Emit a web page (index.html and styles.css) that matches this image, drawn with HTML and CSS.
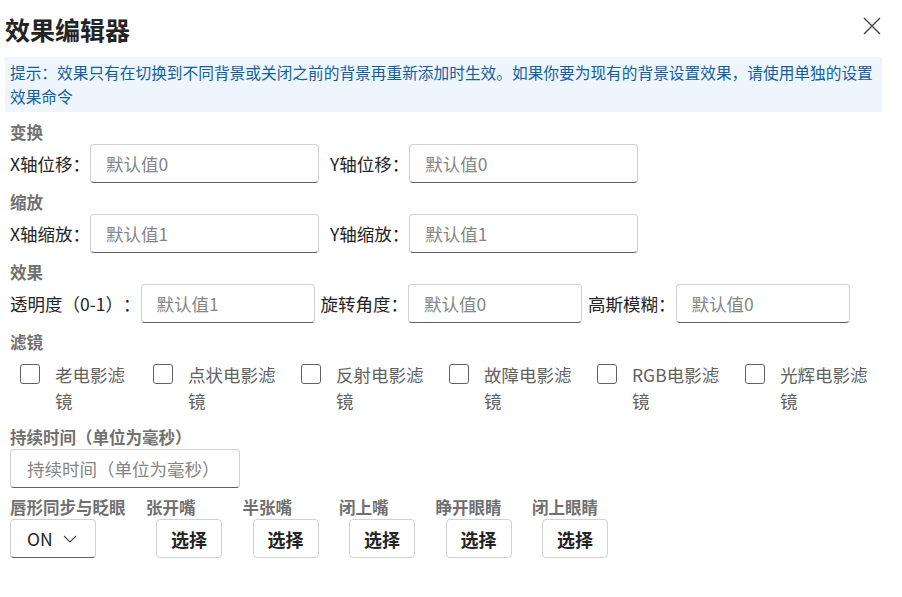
FILE: index.html
```html
<!DOCTYPE html>
<html lang="zh-CN">
<head>
<meta charset="utf-8">
<title>效果编辑器</title>
<link rel="stylesheet" href="styles.css">
</head>
<body>
<div class="dialog">
  <div class="header">
    <h1 class="title">效果编辑器</h1>
    <button class="close" aria-label="关闭">
      <svg width="20" height="20" viewBox="0 0 20 20"><path d="M2 2 L18 18 M18 2 L2 18" stroke="#424242" stroke-width="1.4" fill="none"/></svg>
    </button>
  </div>
  <div class="tip">提示：效果只有在切换到不同背景或关闭之前的背景再重新添加时生效。如果你要为现有的背景设置效果，请使用单独的设置效果命令</div>
  <div class="content">
    <div class="heading">变换</div>
    <div class="row row-pair">
      <label class="field"><span class="label">X轴位移：</span><input class="input" placeholder="默认值0"></label>
      <label class="field"><span class="label">Y轴位移：</span><input class="input" placeholder="默认值0"></label>
    </div>
    <div class="heading">缩放</div>
    <div class="row row-pair">
      <label class="field"><span class="label">X轴缩放：</span><input class="input" placeholder="默认值1"></label>
      <label class="field"><span class="label">Y轴缩放：</span><input class="input" placeholder="默认值1"></label>
    </div>
    <div class="heading">效果</div>
    <div class="row row-triple">
      <label class="field"><span class="label">透明度（0-1）：</span><input class="input" placeholder="默认值1"></label>
      <label class="field"><span class="label">旋转角度：</span><input class="input" placeholder="默认值0"></label>
      <label class="field"><span class="label">高斯模糊：</span><input class="input" placeholder="默认值0"></label>
    </div>
    <div class="heading">滤镜</div>
    <div class="filters">
      <label class="check"><span class="box"></span><span class="check-label">老电影滤镜</span></label>
      <label class="check"><span class="box"></span><span class="check-label">点状电影滤镜</span></label>
      <label class="check"><span class="box"></span><span class="check-label">反射电影滤镜</span></label>
      <label class="check"><span class="box"></span><span class="check-label">故障电影滤镜</span></label>
      <label class="check"><span class="box"></span><span class="check-label">RGB电影滤镜</span></label>
      <label class="check"><span class="box"></span><span class="check-label">光辉电影滤镜</span></label>
    </div>
    <div class="heading">持续时间（单位为毫秒）</div>
    <input class="input input-duration" placeholder="持续时间（单位为毫秒）">
    <div class="bottom">
      <div class="col">
        <div class="heading">唇形同步与眨眼</div>
        <button class="select">ON<svg width="14" height="8" viewBox="0 0 14 8"><path d="M1 1 L7 7 L13 1" stroke="#424242" stroke-width="1.1" fill="none"/></svg></button>
      </div>
      <div class="col col-btn">
        <div class="heading">张开嘴</div>
        <button class="btn">选择</button>
      </div>
      <div class="col col-btn">
        <div class="heading">半张嘴</div>
        <button class="btn">选择</button>
      </div>
      <div class="col col-btn">
        <div class="heading">闭上嘴</div>
        <button class="btn">选择</button>
      </div>
      <div class="col col-btn">
        <div class="heading">睁开眼睛</div>
        <button class="btn">选择</button>
      </div>
      <div class="col col-btn">
        <div class="heading">闭上眼睛</div>
        <button class="btn">选择</button>
      </div>
    </div>
  </div>
</div>
</body>
</html>
```
FILE: styles.css
```css
* { box-sizing: border-box; }
html, body { margin: 0; padding: 0; background: #ffffff; }
body {
  font-family: "Noto Sans CJK SC", "Noto Sans", sans-serif;
  color: #242424;
  text-spacing-trim: space-all;
}
.dialog {
  width: 902px;
  padding: 12px 20px 0 5px;
}
.header {
  display: flex;
  align-items: center;
  justify-content: space-between;
  height: 34px;
}
.title {
  margin: 0;
  font-size: 25px;
  line-height: 34px;
  font-weight: 700;
  color: #242424;
}
.close {
  width: 20px;
  height: 20px;
  padding: 0;
  margin: -6px 0 0 0;
  border: 0;
  background: none;
  display: flex;
}
.tip {
  margin-top: 11px;
  background: #eef5fc;
  color: #115ea3;
  font-size: 15.7px;
  line-height: 24px;
  padding: 4px 5px 3px 5px;
  border-radius: 2px;
  height: 55px;
}
.content {
  padding: 9px 0 0 5px;
  display: flex;
  flex-direction: column;
  gap: 8px;
  align-items: flex-start;
}
.heading {
  font-size: 16.5px;
  line-height: 22px;
  font-weight: 700;
  color: #707070;
  margin-bottom: -7px;
  white-space: nowrap;
}
.row {
  display: flex;
  align-items: center;
}
.row-pair { gap: 11px; }
.row-triple { gap: 6px; }
.field {
  display: flex;
  align-items: center;
}
.label {
  font-size: 17.5px;
  line-height: 24px;
  color: #242424;
  white-space: nowrap;
}
.input {
  height: 39px;
  border: 1px solid #d1d1d1;
  border-bottom-color: #616161;
  border-radius: 4px;
  padding: 0 0 0 15px;
  font-family: inherit;
  font-size: 17.5px;
  color: #242424;
  background: #fff;
  outline: none;
}
.input::placeholder { color: #858585; }
.row-pair .input { width: 229px; }
.row-triple .input { width: 174px; }
.filters {
  display: grid;
  grid-template-columns: 133px repeat(5, 148px);
  margin-top: 8px;
  margin-bottom: 4px;
}
.check {
  display: flex;
  align-items: flex-start;
  padding: 0 10px;
}
.box {
  flex: none;
  width: 20px;
  height: 20px;
  margin-top: 2px;
  border: 1px solid #616161;
  border-radius: 3px;
}
.check-label {
  margin-left: 15px;
  font-size: 17.5px;
  line-height: 26px;
  color: #616161;
}
.input-duration {
  width: 230px;
  padding-left: 16px;
}
.bottom {
  display: flex;
  gap: 20.5px;
}
.col {
  display: flex;
  flex-direction: column;
  align-items: flex-start;
}
.col .heading { margin-bottom: 1px; }
.col-btn { width: 76px; }
.select {
  width: 86px;
  height: 39px;
  display: flex;
  align-items: center;
  gap: 10px;
  padding: 0 0 0 16px;
  border: 1px solid #d1d1d1;
  border-bottom-color: #616161;
  border-radius: 4px;
  background: #fff;
  font-family: inherit;
  font-size: 17.5px;
  color: #242424;
}
.btn {
  margin-left: 10px;
  width: 66px;
  height: 39px;
  padding: 0;
  border: 1px solid #d1d1d1;
  border-radius: 4px;
  background: #fff;
  font-family: inherit;
  font-size: 18px;
  font-weight: 700;
  color: #242424;
}
```
